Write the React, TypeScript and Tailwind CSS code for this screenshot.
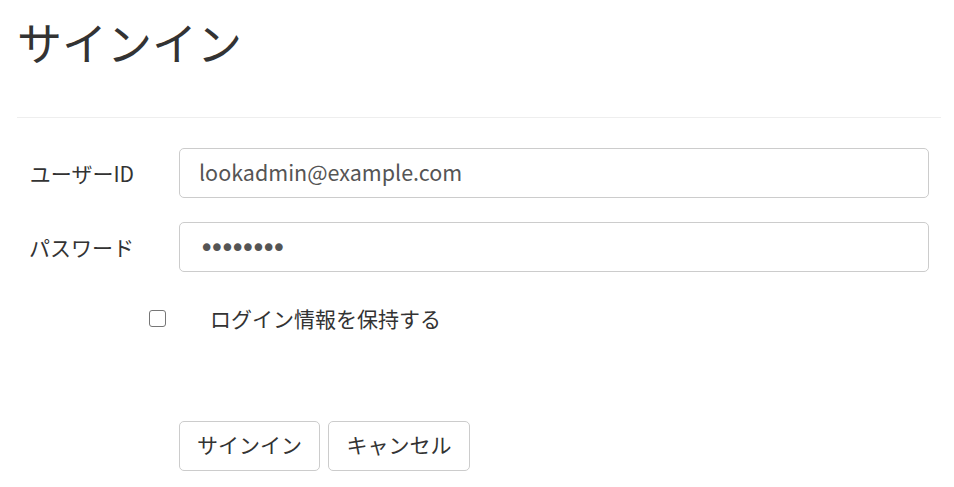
export default function App() {
  return (
    <div className="min-h-[487px] bg-white px-[17px] font-['Noto_Sans_CJK_JP','Noto_Sans',sans-serif] text-[#333]">
      <h1 className="pt-[17px] text-[45px] font-normal leading-[50px]">サインイン</h1>

      <div className="mt-[50px] mr-[-4px] h-px bg-[#eeeeee]" />

      <form className="mt-[30px]">
        <div className="flex items-center">
          <label className="w-[117px] text-right text-[21px] leading-[30px]">ユーザーID</label>
          <div className="ml-[45px] flex-1 pr-[8px]">
            <input
              type="text"
              defaultValue="lookadmin@example.com"
              className="h-[50px] w-full rounded-[5px] border border-[#cccccc] bg-white px-[19px] pb-[4px] text-[21.5px] text-[#555] outline-none"
            />
          </div>
        </div>

        <div className="mt-[24px] flex items-center">
          <label className="w-[117px] text-right text-[21px] leading-[30px]">パスワード</label>
          <div className="ml-[45px] flex-1 pr-[8px]">
            <input
              type="password"
              defaultValue="password"
              className="h-[50px] w-full rounded-[5px] border border-[#cccccc] bg-white px-[19px] pt-[2px] font-['DejaVu_Sans',sans-serif] text-[26px] tracking-[-5px] text-[#555] outline-none"
            />
          </div>
        </div>

        <div className="mt-[31px] flex items-center">
          <span className="ml-[132px] h-[17px] w-[17px] rounded-[3px] border-[1.5px] border-[#767676] bg-white" />
          <span className="ml-[44px] text-[21px] leading-[30px]">ログイン情報を保持する</span>
        </div>

        <div className="mt-[88px] ml-[162px] flex gap-[8px]">
          <button
            type="button"
            className="h-[50px] w-[141px] rounded-[5px] border border-[#cccccc] bg-white pb-[2px] text-[21px] text-[#333]"
          >
            サインイン
          </button>
          <button
            type="button"
            className="h-[50px] w-[142px] rounded-[5px] border border-[#cccccc] bg-white pb-[2px] text-[21px] text-[#333]"
          >
            キャンセル
          </button>
        </div>
      </form>
    </div>
  );
}
